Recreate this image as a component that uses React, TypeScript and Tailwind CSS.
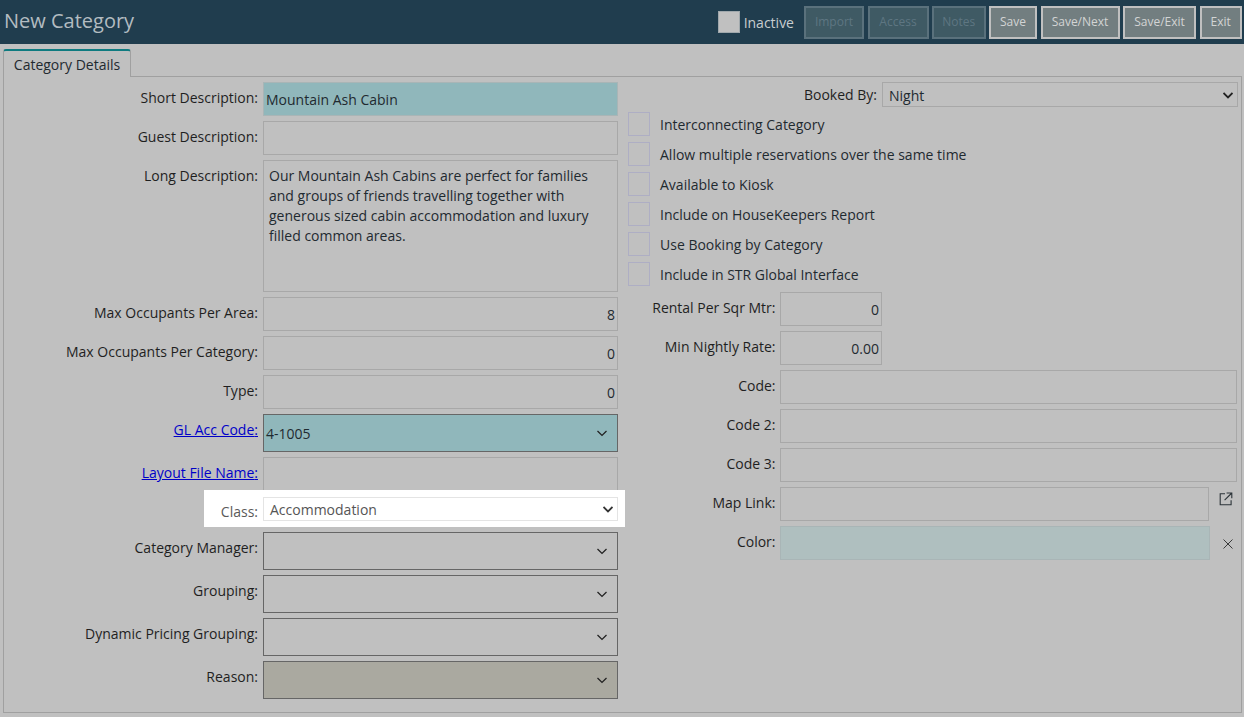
import React from "react";

const Chev = () => (
  <svg width="10" height="7" viewBox="0 0 10 7" fill="none" stroke="#222" strokeWidth="1.3" className="absolute right-[10px] top-[15px]">
    <path d="M.5 1 5 5.400 9.500 1" />
  </svg>
);

const Label = ({ children, link, w }: { children: React.ReactNode; link?: boolean; w: string }) => (
  <div className={`${w} shrink-0 text-right pt-[6px] leading-[20px] whitespace-nowrap ${link ? "text-[#0000c8] underline" : "text-[#1f1f1f]"}`}>{children}</div>
);

const LeftRow = ({ label, link, children }: { label: string; link?: boolean; children: React.ReactNode }) => (
  <div className="flex gap-[5px]">
    <Label link={link} w="w-[254px]">{label}:</Label>
    {children}
  </div>
);

const TextBox = ({ value, right, teal }: { value?: string; right?: boolean; teal?: boolean }) => (
  <div className={`w-[355px] h-[34px] border flex items-center px-[2px] leading-[20px] text-[#1f2a30] ${right ? "justify-end" : ""} ${teal ? "bg-[#90b7bb] border-[#a9b5b6]" : "border-[#a8a8a8]"}`}>
    <span className="pt-[1px]">{value}</span>
  </div>
);

const DropBox = ({ value, bg }: { value?: string; bg?: string }) => (
  <div className={`relative w-[355px] h-[38px] border border-[#666] flex items-center px-[2px] text-[#1f2a30] ${bg ?? ""}`}>
    <span className="pt-[1px]">{value}</span>
    <Chev />
  </div>
);

const RightRow = ({ label, width, value, color }: { label: string; width: string; value?: string; color?: string }) => (
  <div className="flex gap-[4.5px]">
    <Label w="w-[147.500px]">{label}:</Label>
    <div className={`${width} h-[34px] border ${color ?? "border-[#a8a8a8]"} flex items-center justify-end px-[2px] text-[#1f2a30]`}>
      <span className="pt-[1px]">{value}</span>
    </div>
  </div>
);

const Check = ({ label }: { label: string }) => (
  <div className="flex items-center gap-[10px] h-[24px] mb-[6px]">
    <div className="w-[22px] h-[24px] border border-[#aeaec4]" />
    <span className="text-[#1f2a30] leading-[20px] pt-[2px]">{label}</span>
  </div>
);

const Btn = ({ children, off, w }: { children: string; off?: boolean; w: string }) => (
  <div className={`${w} h-[33px] border-2 flex items-center justify-center text-[12px] ${off ? "bg-[#3f5a64] border-[#5a717c] text-[#5e7682]" : "bg-[#727e80] border-[#c0c0c0] text-[#d2d4d4]"}`}>
    {children}
  </div>
);

export default function App() {
  return (
    <div className="w-[1244px] h-[717px] overflow-hidden bg-[#c0c0c0] text-[14px] font-['Open_Sans',sans-serif] flex flex-col">
      <header className="h-[44px] shrink-0 bg-[#203d4e] flex items-center pl-[4px] pr-[2px]">
        <h1 className="text-[20px] text-[#b3bcc1] leading-[28px] -mt-[3px]">New Category</h1>
        <div className="ml-auto flex items-center">
          <div className="w-[22px] h-[22px] bg-[#c0c0c0] border border-[#a0a8ac] mr-[4px]" />
          <span className="text-[#c8cdd0] mr-[10px]">Inactive</span>
          <div className="flex gap-[3.5px]">
            <Btn off w="w-[60px]">Import</Btn>
            <Btn off w="w-[61px]">Access</Btn>
            <Btn off w="w-[53.500px]">Notes</Btn>
            <Btn w="w-[48px]">Save</Btn>
            <Btn w="w-[79px]">Save/Next</Btn>
            <Btn w="w-[73px]">Save/Exit</Btn>
            <Btn w="w-[42.500px]">Exit</Btn>
          </div>
        </div>
      </header>

      <div className="pl-[3px] pt-[5px] h-[32px] shrink-0 flex">
        <div className="w-[128px] h-[28px] border border-[#a0a0a0] border-t-2 border-t-[#0f7b80] border-b-0 rounded-t-[3px] bg-[#c0c0c0] text-center leading-[28px] text-[#1f2a30] relative z-10">
          Category Details
        </div>
      </div>

      <main className="ml-[3px] mr-[2px] h-[637px] border border-[#a0a0a0] flex pt-[5px]">
        <section className="w-[614px] shrink-0 flex flex-col gap-[5px]">
          <LeftRow label="Short Description"><TextBox value="Mountain Ash Cabin" teal /></LeftRow>
          <LeftRow label="Guest Description"><TextBox /></LeftRow>
          <LeftRow label="Long Description">
            <div className="w-[355px] h-[132px] border border-[#a8a8a8] pl-[5px] pr-[10px] pt-[5px] leading-[20px] text-[#1f2a30]">
              Our Mountain Ash Cabins are perfect for families and groups of friends travelling together with generous sized cabin accommodation and luxury filled common areas.
            </div>
          </LeftRow>
          <LeftRow label="Max Occupants Per Area"><TextBox value="8" right /></LeftRow>
          <LeftRow label="Max Occupants Per Category"><TextBox value="0" right /></LeftRow>
          <LeftRow label="Type"><TextBox value="0" right /></LeftRow>
          <LeftRow label="GL Acc Code" link><DropBox value="4-1005" bg="bg-[#90b7bb]" /></LeftRow>
          <LeftRow label="Layout File Name" link><TextBox /></LeftRow>
          <div className="relative z-10 flex ml-[200px] w-[421px] h-[37px] -mt-[6px] bg-white items-center gap-[5px]">
            <div className="w-[54px] shrink-0 text-right text-[#5a5a5a] pt-[7px] leading-[20px]">Class:</div>
            <div className="relative w-[355px] h-[24px] border border-[#e4e4e4] flex items-center pl-[6px] pt-[1px] text-[#555]">
              Accommodation
              <svg width="10" height="7" viewBox="0 0 10 7" fill="none" stroke="#333" strokeWidth="1.8" className="absolute right-[4px] top-[8px]">
                <path d="M.5 1 5 5.400 9.500 1" />
              </svg>
            </div>
          </div>
          <LeftRow label="Category Manager"><DropBox /></LeftRow>
          <LeftRow label="Grouping"><DropBox /></LeftRow>
          <LeftRow label="Dynamic Pricing Grouping"><DropBox /></LeftRow>
          <LeftRow label="Reason"><DropBox bg="bg-[#aaa9a0]" /></LeftRow>
        </section>

        <section className="ml-[10px] flex-1 flex flex-col">
          <div className="flex gap-[5px] h-[25px] mb-[5px]">
            <div className="w-[249px] text-right text-[#1f1f1f] pt-[3px] leading-[20px]">Booked By:</div>
            <div className="relative w-[356px] h-[25px] border border-[#a8a8a8] flex items-center pl-[6px] pt-[2px] text-[#1f2a30]">
              Night
              <svg width="10" height="7" viewBox="0 0 10 7" fill="none" stroke="#222" strokeWidth="1.8" className="absolute right-[4px] top-[9px]">
                <path d="M.5 1 5 5.400 9.500 1" />
              </svg>
            </div>
          </div>
          <Check label="Interconnecting Category" />
          <Check label="Allow multiple reservations over the same time" />
          <Check label="Available to Kiosk" />
          <Check label="Include on HouseKeepers Report" />
          <Check label="Use Booking by Category" />
          <Check label="Include in STR Global Interface" />
          <div className="flex flex-col gap-[5px]">
            <RightRow label="Rental Per Sqr Mtr" width="w-[102px]" value="0" />
            <RightRow label="Min Nightly Rate" width="w-[102px]" value="0.00" />
            <RightRow label="Code" width="w-[457px]" />
            <RightRow label="Code 2" width="w-[457px]" />
            <RightRow label="Code 3" width="w-[457px]" />
            <div className="flex items-start">
              <RightRow label="Map Link" width="w-[429px]" />
              <svg width="14" height="14" viewBox="0 0 14 14" fill="none" stroke="#2b3338" strokeWidth="1.1" className="ml-[10px] mt-[5px]">
                <path d="M6 1.800H1.200v10.900h10.900V8.200M7.600 1h5.200v5.200M12.800 1 5.600 8.200" />
              </svg>
            </div>
            <div className="flex items-start">
              <RightRow label="Color" width="w-[430px]" color="border-[#a9b5b6] bg-[#afbfbf]" />
              <svg width="10" height="10" viewBox="0 0 10 10" fill="none" stroke="#3a3a3a" strokeWidth="1" className="ml-[13px] mt-[13px]">
                <path d="M.5.5l9 9M9.500.5l-9 9" />
              </svg>
            </div>
          </div>
        </section>
      </main>
    </div>
  );
}
